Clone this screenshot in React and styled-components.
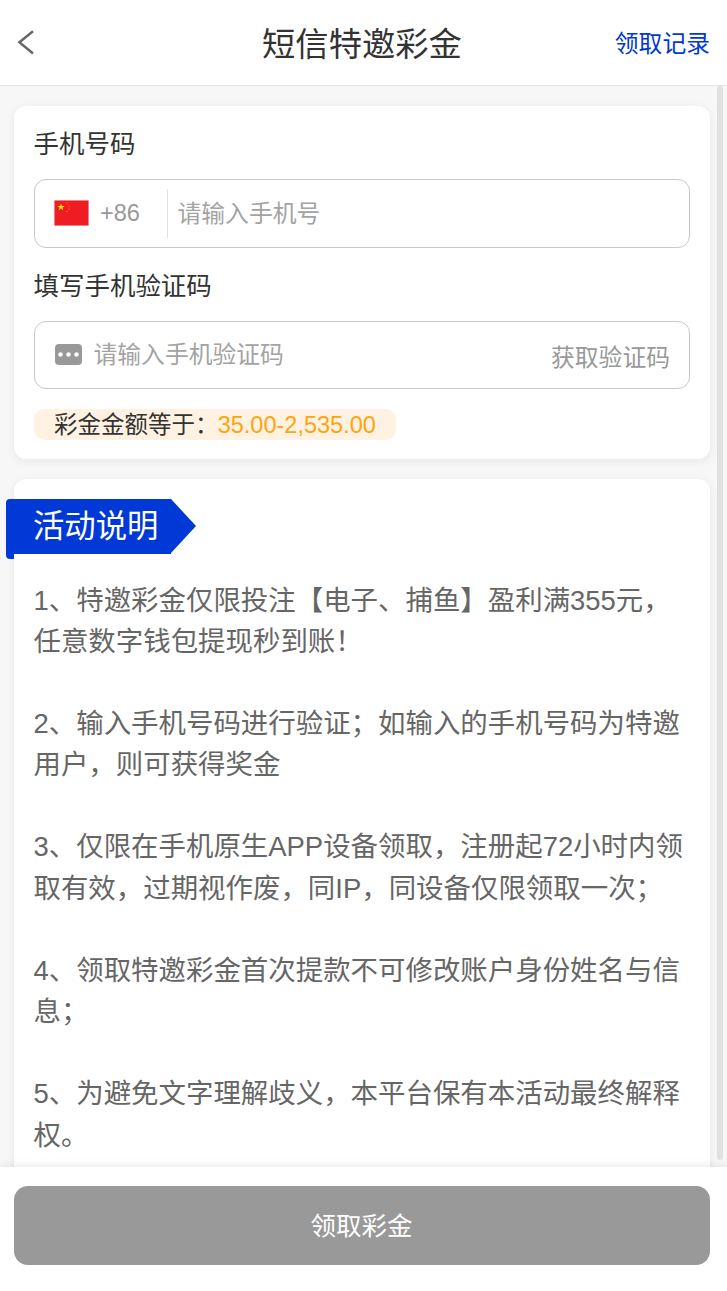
import React from 'react';
import styled, { createGlobalStyle } from 'styled-components';

const FONT = '"Liberation Sans", "Noto Sans CJK SC", sans-serif';

const Global = createGlobalStyle`
  html, body { margin: 0; padding: 0; background: #fff; }
  * { box-sizing: border-box; }
  body { font-family: ${FONT}; }
`;

const Page = styled.div`
  width: 727px;
  height: 1291px;
  display: flex;
  flex-direction: column;
  overflow: hidden;
  background: #fff;
`;

const Header = styled.header`
  flex: 0 0 86px;
  display: grid;
  grid-template-columns: 1fr auto 1fr;
  align-items: center;
  padding: 0 17px;
  background: #fff;
  border-bottom: 1px solid #e4e4e4;
`;

const BackButton = styled.button`
  justify-self: start;
  display: flex;
  padding: 0;
  border: 0;
  background: none;
`;

const Title = styled.h1`
  margin: 0 3px 2px 0;
  font-size: 33.32px;
  font-weight: 400;
  color: #333;
`;

const RecordLink = styled.a`
  justify-self: end;
  font-size: 23.8px;
  margin-bottom: 2px;
  color: #0039d6;
`;

const ScrollArea = styled.div`
  flex: 1 1 0;
  min-height: 0;
  position: relative;
  overflow: hidden;
  background: #f7f7f7;
`;

const ScrollThumb = styled.div`
  position: absolute;
  top: 0;
  right: 4px;
  width: 6px;
  height: 1074px;
  border-radius: 3px;
  background: #e1e1e1;
`;

const Content = styled.main`
  padding: 20px 17px 0 14px;
  display: flex;
  flex-direction: column;
  gap: 20px;
`;

const FormCard = styled.section`
  background: #fff;
  border-radius: 12px;
  box-shadow: 0 2px 8px rgba(0, 0, 0, 0.07);
  padding: 23px 20px 19px;
`;

const FieldLabel = styled.div`
  margin-left: -0.5px;
  font-size: 25.48px;
  line-height: 30px;
  color: #333;
`;

const FieldBox = styled.div`
  display: flex;
  align-items: center;
  height: ${p => p.$h}px;
  margin: 20px 0 ${p => p.$mb}px;
  padding: 0 19px;
  border: 1px solid #c9c9c9;
  border-radius: 12px;
`;

const Flag = styled.svg`
  flex: none;
  width: 35px;
  height: 26px;
  margin: 0 11px 2px 0;
`;

const Dial = styled.span`
  flex: none;
  width: 68px;
  align-self: stretch;
  display: flex;
  align-items: center;
  font-size: 23.52px;
  color: #999;
  position: relative;
  &::after {
    content: '';
    position: absolute;
    right: 0;
    top: 9px;
    bottom: 9px;
    width: 1px;
    background: #e2e2e2;
  }
`;

const TextInput = styled.input`
  flex: 1;
  min-width: 0;
  padding: 0;
  border: 0;
  outline: 0;
  background: none;
  font-family: ${FONT};
  font-size: 23.8px;
  margin-left: ${p => p.$ml}px;
  color: #333;
  &::placeholder { color: #a3a3a3; opacity: 1; }
`;

const MessageIcon = styled.svg`
  flex: none;
  width: 27px;
  height: 21px;
  margin: 0 0 1px 1px;
`;

const CodeButton = styled.span`
  flex: none;
  font-size: 23.8px;
  color: #999;
`;

const AmountPill = styled.div`
  width: 362px;
  height: 31px;
  margin-top: 20px;
  padding-left: 20px;
  background: #fff2e3;
  border-radius: 10px;
  font-size: 23.52px;
  line-height: 33px;
  color: #333;
`;

const AmountValue = styled.span`
  margin-left: -1px;
  color: #ffa40d;
`;

const InfoCard = styled.section`
  background: #fff;
  border-radius: 12px 12px 0 0;
  box-shadow: 0 2px 8px rgba(0, 0, 0, 0.07);
  padding: 20px 20px 32px;
`;

const Ribbon = styled.h2`
  position: relative;
  width: 165px;
  height: 55px;
  margin: 0 0 25.5px -28px;
  padding: 0 0 7px 27px;
  display: flex;
  align-items: center;
  background: #0039d6;
  border-radius: 4px 0 0 0;
  color: #fff;
  font-size: 31.36px;
  font-weight: 400;
  &::before {
    content: '';
    position: absolute;
    left: 0;
    bottom: -5px;
    width: 8px;
    height: 10px;
    background: #0039d6;
    border-radius: 0 0 0 4px;
  }
  &::after {
    content: '';
    position: absolute;
    left: 100%;
    top: 0;
    border-left: 25px solid #0039d6;
    border-top: 27.5px solid transparent;
    border-bottom: 27.5px solid transparent;
  }
`;

const Rules = styled.div`
  margin-left: -0.5px;
  font-size: 27.44px;
  line-height: 1.5;
  color: #666;
`;

const Rule = styled.p`
  margin: 0 0 1.5em;
  &:last-child { margin-bottom: 0; }
`;

const Footer = styled.footer`
  flex: 0 0 124px;
  position: relative;
  padding: 19px 17px 26px 14px;
  background: #fff;
  box-shadow: 0 -2px 8px rgba(0, 0, 0, 0.08);
`;

const ClaimButton = styled.button`
  display: block;
  width: 696px;
  height: 79px;
  padding: 0 1px 5px 0;
  border: 0;
  border-radius: 14px;
  background: #999;
  color: #fff;
  font-family: ${FONT};
  font-size: 25.48px;
`;

const rules = [
  '1、特邀彩金仅限投注【电子、捕鱼】盈利满355元，任意数字钱包提现秒到账！',
  '2、输入手机号码进行验证；如输入的手机号码为特邀用户，则可获得奖金',
  '3、仅限在手机原生APP设备领取，注册起72小时内领取有效，过期视作废，同IP，同设备仅限领取一次；',
  '4、领取特邀彩金首次提款不可修改账户身份姓名与信息；',
  '5、为避免文字理解歧义，本平台保有本活动最终解释权。',
];

export default function App() {
  return (
    <Page>
      <Global />
      <Header>
        <BackButton aria-label="返回">
          <svg width="18" height="26" viewBox="0 0 18 26" fill="none">
            <path d="M16 1.2 2.4 12.2 16 23.5" stroke="#666" strokeWidth="2.4" />
          </svg>
        </BackButton>
        <Title>短信特邀彩金</Title>
        <RecordLink>领取记录</RecordLink>
      </Header>
      <ScrollArea>
        <Content>
          <FormCard>
            <FieldLabel>手机号码</FieldLabel>
            <FieldBox $h={69} $mb={23}>
              <Flag viewBox="0 0 35 26">
                <rect width="35" height="26" fill="#e8e8e8" />
                <rect x="0.5" y="0.5" width="34" height="25" fill="#f01c24" />
                <polygon points="7,3.4 7.9,6 10.6,6 8.4,7.6 9.2,10.2 7,8.6 4.8,10.2 5.6,7.6 3.4,6 6.1,6" fill="#ffe600" />
                <circle cx="13" cy="3" r="0.6" fill="#ffb000" />
                <circle cx="15" cy="6" r="0.6" fill="#ffb000" />
                <circle cx="15" cy="9" r="0.6" fill="#ffb000" />
                <circle cx="13" cy="11.5" r="0.6" fill="#ffb000" />
              </Flag>
              <Dial>+86</Dial>
              <TextInput $ml={9.5} placeholder="请输入手机号" />
            </FieldBox>
            <FieldLabel>填写手机验证码</FieldLabel>
            <FieldBox $h={68} $mb={0}>
              <MessageIcon viewBox="0 0 27 21">
                <rect width="27" height="21" rx="4" fill="#999" />
                <circle cx="5.5" cy="10.5" r="2.2" fill="#fff" />
                <circle cx="13.5" cy="10.5" r="2.2" fill="#fff" />
                <circle cx="21.5" cy="10.5" r="2.2" fill="#fff" />
              </MessageIcon>
              <TextInput $ml={11.5} placeholder="请输入手机验证码" />
              <CodeButton>获取验证码</CodeButton>
            </FieldBox>
            <AmountPill>
              彩金金额等于：<AmountValue>35.00-2,535.00</AmountValue>
            </AmountPill>
          </FormCard>
          <InfoCard>
            <Ribbon>活动说明</Ribbon>
            <Rules>
              {rules.map(r => <Rule key={r}>{r}</Rule>)}
            </Rules>
          </InfoCard>
        </Content>
        <ScrollThumb />
      </ScrollArea>
      <Footer>
        <ClaimButton>领取彩金</ClaimButton>
      </Footer>
    </Page>
  );
}
